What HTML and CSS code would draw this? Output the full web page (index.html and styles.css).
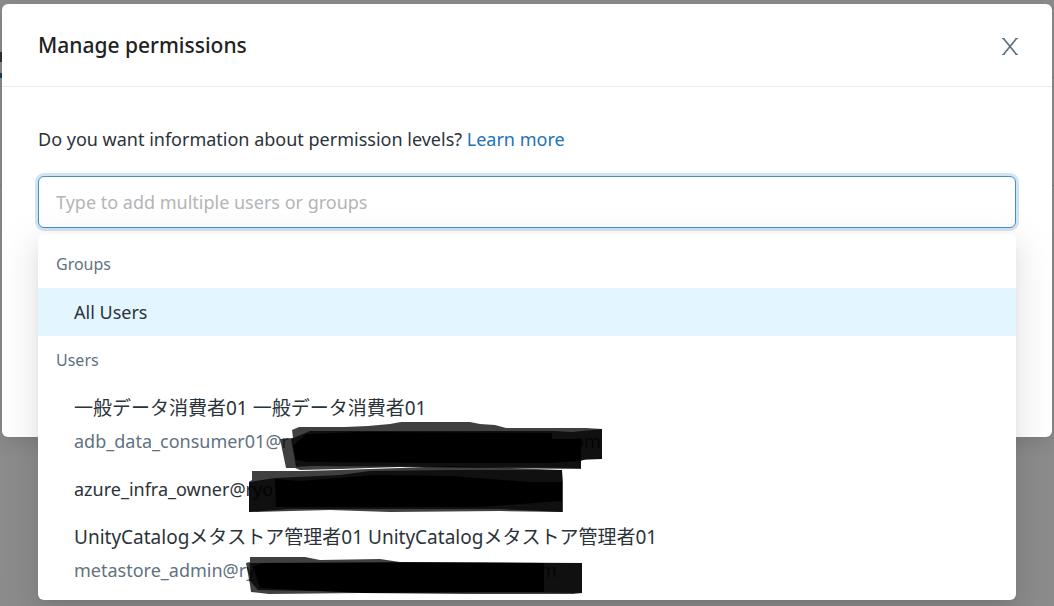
FILE: index.html
```html
<!DOCTYPE html>
<html lang="en">
<head>
<meta charset="utf-8">
<title>Manage permissions</title>
<link rel="stylesheet" href="styles.css">
</head>
<body>
<div class="page-behind" aria-hidden="true">
  <div class="tab-strip"><span class="tab-glyph"></span><span class="tab-ink"></span></div>
  <div class="page-rule"></div>
</div>
<main class="dialog" role="dialog" aria-labelledby="dialog-title">
  <header class="dialog-header">
    <h1 class="dialog-title" id="dialog-title">Manage permissions</h1>
    <button class="close-button" type="button" aria-label="Close">
      <svg width="16" height="17" viewBox="0 0 16 17" fill="none" stroke="#5f7281"><path d="M1.5 .5L14.5 16.5M14.5 .5L1.5 16.5" stroke-width="1.7"/><path d="M0 .5h2.5M13.500 .5H16M0 16.500h2.500M13.500 16.500H16"/></svg>
    </button>
  </header>
  <section class="dialog-body">
    <p class="intro"><label for="principal">Do you want information about permission levels?</label> <a class="link" href="#">Learn more</a></p>
    <div class="picker">
      <input class="picker-input" id="principal" type="text" placeholder="Type to add multiple users or groups">
      <div class="menu" role="listbox" aria-label="Users and groups">
        <div class="menu-group">Groups</div>
        <div class="option option-active" role="option" aria-selected="true">All Users</div>
        <div class="menu-group">Users</div>
        <div class="option" role="option">
          <div class="option-name">一般データ消費者01 一般データ消費者01</div>
          <div class="option-mail">adb_data_consumer01@r</div>
        </div>
        <div class="option" role="option">azure_infra_owner@ryo</div>
        <div class="option" role="option">
          <div class="option-name">UnityCatalogメタストア管理者01 UnityCatalogメタストア管理者01</div>
          <div class="option-mail">metastore_admin@ry</div>
        </div>
        <svg class="redaction" width="370" height="180" viewBox="240 418 370 180" aria-hidden="true">
          <g fill="#000" fill-opacity=".75">
            <path d="M280 439L293 438L292 430L299 427L345 427L368 426L390 424L401 422H470L480 424L495 425L506 428H586L602 429V459H586L581 461V469L495 468L400 467L340 469L300 470L295 468H286Z"/>
            <path d="M252 471H300L340 470L400 468L450 466L510 468L562 470L563 482V512L500 511L390 512L330 510L249 512V482L252 480Z"/>
            <path d="M246 563L250 562V557H305L320 560L380 559L400 562L545 563L582 563V593L573 594H467L361 593L269 594L251 592L250 585Z"/>
          </g>
          <g fill="#000" fill-opacity=".75">
            <path d="M291 439L310 431H554L572 432L602 429V459L581 460V468L310 466L296 467Z"/>
            <path d="M249 482L275 478L340 475L370 471L450 470H562V512L500 509H290L249 512Z"/>
            <path d="M250 563L400 562L582 563V593L480 592L361 592L258 590L250 581Z"/>
          </g>
          <g fill="#000">
            <path d="M293 446L306 434L360 432L552 433V439H581V461L551 463H440L308 462L296 460Z"/>
            <path d="M275 479L300 481L374 475L450 476L530 482H562V501L480 507H276Z"/>
            <path d="M253 567L262 563H544V592L363 593L260 588Z"/>
          </g>
          <g class="redaction-text"><text x="573" y="448">om</text><text x="529" y="577">om</text></g>
        </svg>
      </div>
    </div>
  </section>
</main>
</body>
</html>
```
FILE: styles.css
```css
* { box-sizing: border-box; }

body {
  margin: 0;
  min-height: 100vh;
  padding: 4px 2px;
  background: #8c8c8c;
  color: #2b333a;
  font-family: "Noto Sans", "Noto Sans CJK JP", sans-serif;
  font-size: 18px;
  line-height: 30px;
}

.page-behind { position: absolute; inset: 0; }
.tab-strip {
  position: relative;
  height: 78px;
  border-bottom: 1px solid #7b7b7b;
}
.tab-glyph {
  position: absolute;
  left: 0;
  top: 52px;
  width: 2px;
  height: 10px;
  background: #303030;
}
.tab-ink {
  position: absolute;
  left: 0;
  bottom: -1px;
  width: 2px;
  height: 5px;
  background: #123f68;
}
.page-rule { height: 108px; border-bottom: 1px solid #7b7b7b; }

.dialog {
  position: relative;
  background: #fff;
  border-radius: 6px;
  box-shadow: 0 4px 18px rgba(0, 0, 0, .12);
}
.dialog-header {
  display: flex;
  align-items: center;
  justify-content: space-between;
  padding: 26px 34px 26px 36px;
  border-bottom: 1px solid #ebebeb;
}
.dialog-title {
  margin: 0;
  font-size: 21px;
  line-height: 30px;
  font-weight: 500;
  color: #222;
}
.close-button {
  display: flex;
  padding: 2px 0 0;
  border: 0;
  background: none;
}
.dialog-body {
  min-height: 350px;
  padding: 36px;
}
.intro { margin: 0 0 21px; line-height: 32px; }
.link { color: #2272b4; text-decoration: none; }

.picker { position: relative; }
.picker-input {
  display: block;
  width: 100%;
  height: 52px;
  padding: 0 17px;
  border: 1px solid #4290c9;
  border-radius: 6px;
  outline: 0;
  box-shadow: 0 0 0 3px rgba(34, 114, 180, .2);
  color: inherit;
  font: inherit;
}
.picker-input::placeholder { color: #b3b5b7; opacity: 1; }

.menu {
  position: absolute;
  top: 58px;
  left: 0;
  right: 0;
  padding: 6px 0;
  background: #fff;
  border-radius: 6px;
  box-shadow: 0 4px 9px -6px rgba(0, 0, 0, .12), 0 9px 24px rgba(0, 0, 0, .08), 0 13px 42px 12px rgba(0, 0, 0, .05);
}
.menu-group {
  padding: 9px 18px;
  color: #5f7281;
  font-size: 16px;
}
.option { padding: 9px 36px; }
.option-active { background: #e3f6ff; }
.option-name { font-size: 19px; white-space: nowrap; }
.option-mail { margin-top: 3px; color: #5f7281; }

.redaction {
  position: absolute;
  left: 202px;
  top: 184px;
}
.redaction-text { fill: #000; fill-opacity: .8; }
```
